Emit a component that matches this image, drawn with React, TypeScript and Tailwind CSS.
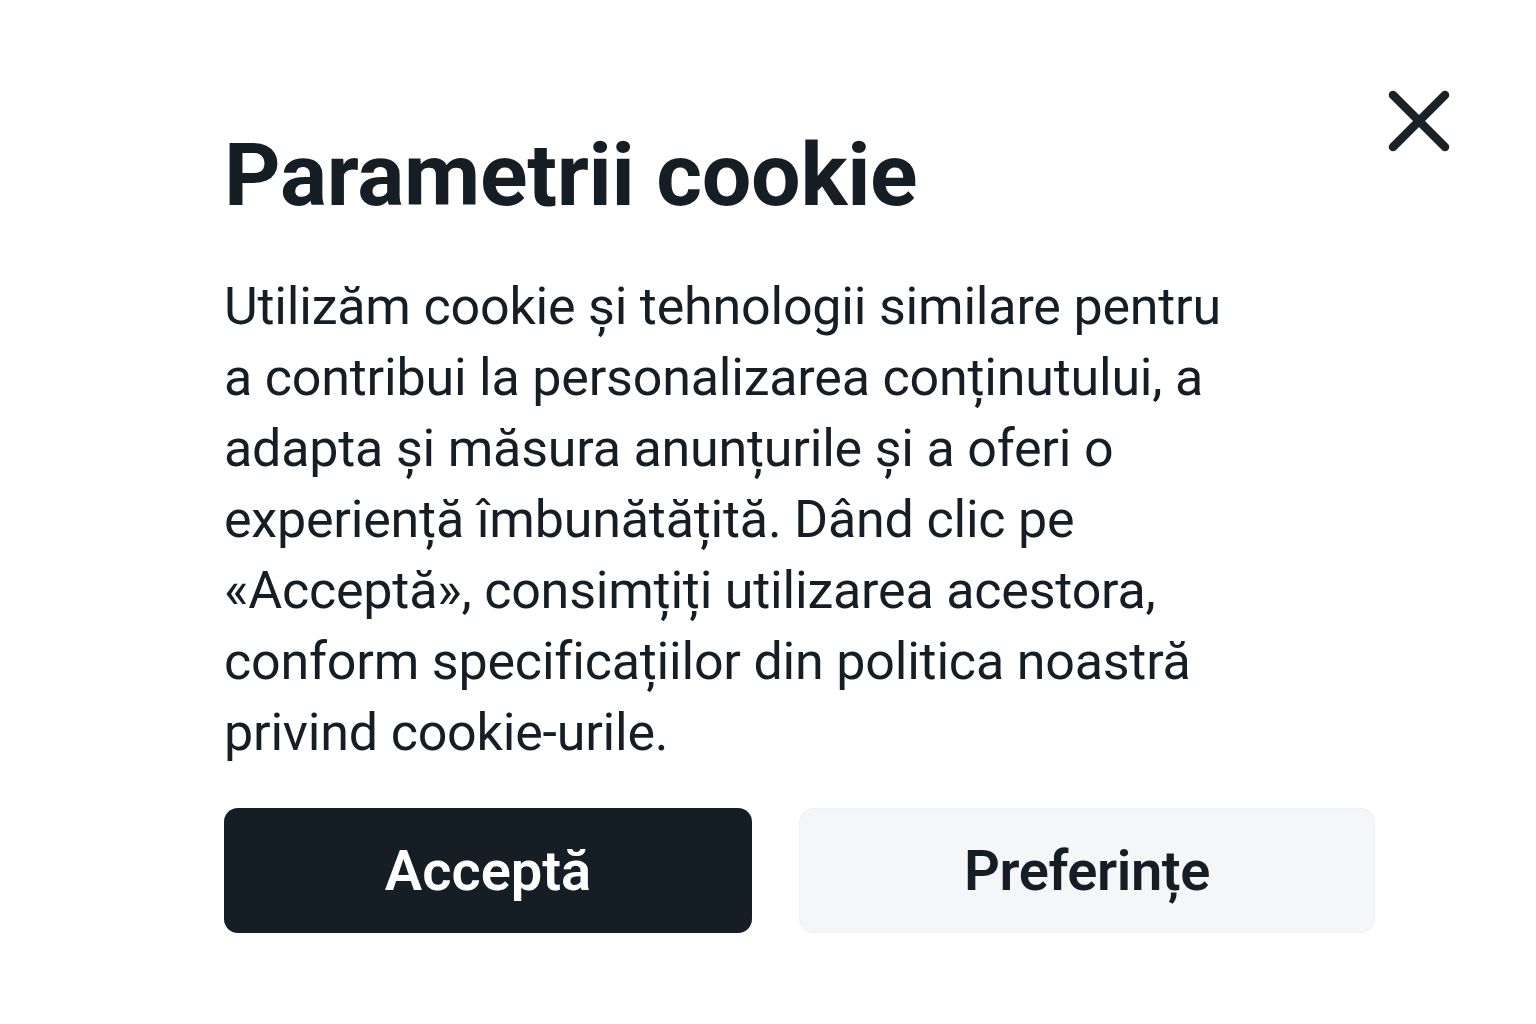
export default function App() {
  return (
    <div className="relative min-h-screen w-full bg-white text-[#161e25]" style={{ fontFamily: "Roboto, 'Noto Sans', sans-serif" }}>
      <button className="absolute top-[90px] right-[86px] text-[#1a2229]">
        <svg width="62" height="62" viewBox="0 0 62 62" fill="none" stroke="currentColor" strokeWidth="8.5" strokeLinecap="round">
          <path d="M5 5L57 57M57 5L5 57" />
        </svg>
      </button>
      <div className="pl-[224px] pt-[131px]">
        <h1 className="text-[88px] leading-none font-bold tracking-[-0.3px]">Parametrii cookie</h1>
        <p className="mt-[52px] w-[1100px] text-[52px] leading-[71px] tracking-[-0.2px]">
          Utilizăm cookie și tehnologii similare pentru<br />
          a contribui la personalizarea conținutului, a<br />
          adapta și măsura anunțurile și a oferi o<br />
          experiență îmbunătățită. Dând clic pe<br />
          «Acceptă», consimțiți utilizarea acestora,<br />
          conform specificațiilor din politica noastră<br />
          privind cookie-urile.
        </p>
        <div className="mt-[40px] flex gap-[47px]">
          <button className="h-[125px] w-[528px] rounded-[14px] bg-[#151e25] text-[56px] font-semibold text-white">Acceptă</button>
          <button className="h-[125px] w-[576px] rounded-[14px] border border-[#eef0f3] bg-[#f4f6f8] text-[56px] font-semibold tracking-[-0.4px] text-[#161e25]">Preferințe</button>
        </div>
      </div>
    </div>
  );
}
